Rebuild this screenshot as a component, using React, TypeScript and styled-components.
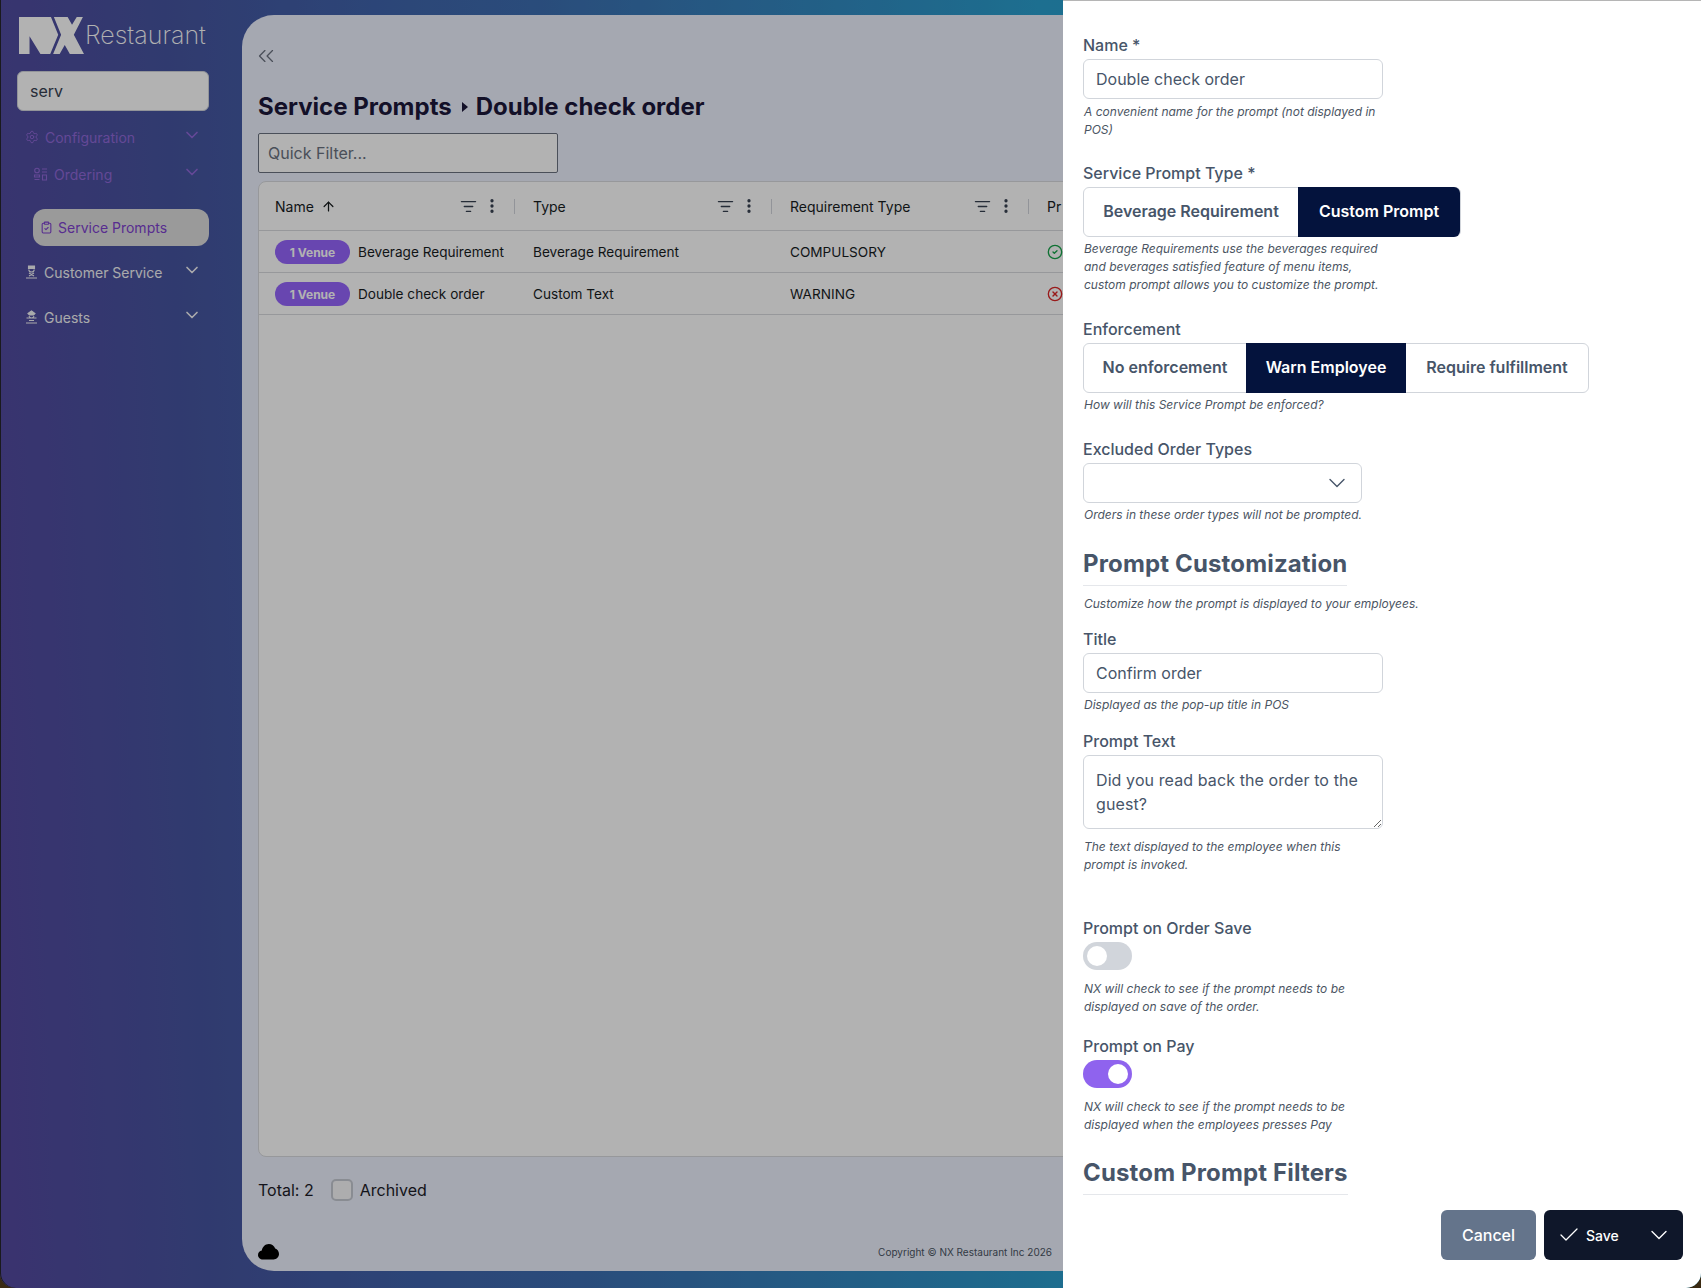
import React from 'react'
import styled, { createGlobalStyle } from 'styled-components'
import {
  ArrowUp,
  Check,
  ChevronDown,
  ChevronsLeft,
  CircleCheck,
  CircleX,
  ClipboardCheck,
  EllipsisVertical,
  ListFilter,
  Settings,
} from 'lucide-react'

const GlobalStyle = createGlobalStyle`
  html, body {
    margin: 0;
    padding: 0;
    background: #3a2a12;
  }
  * {
    box-sizing: border-box;
  }
  body {
    font-family: Inter, "Liberation Sans", sans-serif;
  }
`

const Screen = styled.div`
  position: relative;
  display: flex;
  width: 1701px;
  height: 1288px;
  overflow: hidden;
  border-radius: 0 0 15px 15px;
  box-shadow: inset 1px 0 0 #26262c;
  background: linear-gradient(88deg, #54499f 0%, #46549f 12%, #4064ac 24%, #3d6db0 33%, #2a9fce 62%, #20a5cf 100%);
`

const Sidebar = styled.aside`
  flex: 0 0 242px;
  width: 242px;
  min-width: 0;
  padding: 17px 33px 0 17px;
  display: flex;
  flex-direction: column;
`

const Brand = styled.div`
  display: flex;
  align-items: center;
  height: 37px;
  padding-left: 2px;
  gap: 1px;
  white-space: nowrap;
`

const BrandText = styled.span`
  color: #fff;
  font-size: 25px;
  font-weight: 200;
  line-height: 30px;
  margin-top: -2px;
`

const SearchBox = styled.input`
  margin-top: 17px;
  height: 40px;
  width: 100%;
  border: 1px solid #d1d5db;
  border-radius: 6px;
  background: #fff;
  padding: 0 12px;
  font: 400 16px Inter, sans-serif;
  color: #374151;
`

const NavRow = styled.div<{ $top: number; $indent?: number; $muted?: boolean }>`
  display: flex;
  align-items: center;
  height: 36px;
  margin-top: ${(p) => p.$top}px;
  padding-left: ${(p) => 8 + (p.$indent || 0)}px;
  gap: 6px;
  font-size: 14px;
  font-weight: 400;
  color: ${(p) => (p.$muted ? '#9068d8' : '#f3f4f6')};
`

const NavLabel = styled.span`
  flex: 1;
  white-space: nowrap;
`

const NavChevron = styled(ChevronDown)`
  width: 20px;
  height: 20px;
  margin: -5px 7px 0 0;
  flex: none;
`

const NavPill = styled.div`
  display: flex;
  align-items: center;
  gap: 5px;
  height: 37px;
  margin: 17px 0 0 16px;
  padding-left: 7px;
  border-radius: 12px;
  background: #dddddd;
  color: #7e41ce;
  font-size: 14px;
  font-weight: 400;
`

const Card = styled.main`
  flex: 1;
  margin: 15px 0 17px;
  padding: 0 16px 7px;
  border-radius: 32px 0 0 32px;
  background: #edf1fe;
  display: flex;
  flex-direction: column;
  min-width: 0;
`

const CollapseRow = styled.div`
  height: 20px;
  margin: 31px 0 0 -5px;
  color: #6b7280;
  display: flex;
  align-items: center;
`

const PageTitle = styled.h1`
  margin: 25px 0 0;
  font-size: 24px;
  line-height: 32px;
  font-weight: 700;
  color: #1c173a;
  display: flex;
  align-items: center;
  gap: 8px;
`

const Crumb = styled.span`
  width: 0;
  height: 0;
  margin-left: 2px;
  border-left: 6px solid #1c173a;
  border-top: 5px solid transparent;
  border-bottom: 5px solid transparent;
`

const QuickFilter = styled.input`
  margin-top: 10px;
  width: 300px;
  height: 40px;
  flex: none;
  padding: 0 9px;
  border: 1px solid #6b7280;
  border-radius: 2px;
  background: #fff;
  font: 400 16px Inter, sans-serif;
  &::placeholder {
    color: #6b7280;
    opacity: 1;
  }
`

const Grid = styled.section`
  margin-top: 8px;
  flex: 1;
  border: 1px solid #d8dade;
  border-radius: 8px;
  background: #fff;
  overflow: hidden;
`

const GridRow = styled.div<{ $height: number }>`
  display: grid;
  grid-template-columns: 258px 257px 257px 400px;
  height: ${(p) => p.$height}px;
  border-bottom: 1px solid #d8dade;
  font-size: 13.6px;
  color: #181d1f;
`

const HeadCell = styled.div`
  display: flex;
  align-items: center;
  padding-left: 16px;
  font-size: 14px;
  font-weight: 400;
  white-space: nowrap;
`

const SortArrow = styled(ArrowUp)`
  width: 15px;
  height: 15px;
  margin-left: 7px;
`

const HeadTools = styled.div`
  margin: 0 2px 0 auto;
  display: flex;
  align-items: center;
  gap: 6px;
  color: #374151;
`

const HeadDivider = styled.span`
  width: 1px;
  height: 15px;
  margin-left: 7px;
  background: #d1d5db;
`

const BodyCell = styled.div`
  display: flex;
  align-items: center;
  padding-left: 16px;
  gap: 8px;
  white-space: nowrap;
`

const VenueBadge = styled.span`
  width: 75px;
  height: 24px;
  margin-top: 1px;
  border-radius: 12px;
  background: #9565fd;
  color: #fff;
  font-size: 12px;
  font-weight: 700;
  display: flex;
  align-items: center;
  justify-content: center;
`

const TotalRow = styled.div`
  margin-top: 21px;
  height: 24px;
  display: flex;
  align-items: center;
  font-size: 16px;
  color: #1c1c28;
`

const FakeCheckbox = styled.span`
  width: 22px;
  height: 22px;
  margin: 0 7px 0 17px;
  border: 2px solid #c5c9d2;
  border-radius: 5px;
  background: #f8f8fa;
`

const CardFooter = styled.div`
  margin-top: 38px;
  width: 794px;
  height: 24px;
  display: flex;
  align-items: center;
  justify-content: space-between;
`

const Copyright = styled.span`
  font-size: 10px;
  color: #4b5563;
`

const Dimmer = styled.div`
  position: absolute;
  inset: 0;
  background: rgba(0, 0, 0, 0.3);
`

const Drawer = styled.aside`
  position: absolute;
  top: 0;
  right: 0;
  bottom: 0;
  width: 638px;
  background: #fff;
  border-top: 1px solid #b5b5b5;
  display: flex;
  flex-direction: column;
`

const FormScroll = styled.div`
  flex: 1;
  min-height: 0;
  overflow: hidden;
  padding: 32px 20px 0;
`

const Field = styled.div<{ $top?: number }>`
  margin-top: ${(p) => p.$top ?? 0}px;
`

const Label = styled.label`
  display: block;
  font-size: 16px;
  font-weight: 500;
  line-height: 24px;
  margin-bottom: 2px;
  color: #475569;
`

const TextInput = styled.input`
  display: block;
  width: 300px;
  height: 40px;
  padding: 0 12px;
  border: 1px solid #d1d5db;
  border-radius: 6px;
  background: #fff;
  font: 400 16px Inter, sans-serif;
  color: #475569;
  outline: none;
`

const TextArea = styled.textarea`
  display: block;
  width: 300px;
  height: 74px;
  padding: 12px;
  border: 1px solid #d1d5db;
  border-radius: 6px;
  font: 400 16px/24px Inter, sans-serif;
  letter-spacing: 0.1px;
  color: #475569;
  outline: none;
`

const Help = styled.p<{ $top?: number; $width?: number }>`
  margin: ${(p) => p.$top ?? 3}px 0 0 1px;
  width: ${(p) => p.$width ?? 300}px;
  font-size: 12px;
  line-height: 18px;
  font-style: italic;
  color: #4b5563;
`

const ButtonGroup = styled.div`
  display: inline-flex;
  vertical-align: top;
  height: 50px;
  border: 1px solid #d1d5db;
  border-radius: 6px;
`

const GroupButton = styled.button<{ $active?: boolean; $width: number; $end?: boolean }>`
  width: ${(p) => p.$width}px;
  margin: -1px 0;
  border: 0;
  border-radius: ${(p) => (p.$end ? '0 6px 6px 0' : '0')};
  background: ${(p) => (p.$active ? '#04133d' : 'transparent')};
  color: ${(p) => (p.$active ? '#fff' : '#475569')};
  font: 600 16px Inter, sans-serif;
  padding: 0 0 2px;
`

const GroupRow = styled.div`
  height: 50px;
`

const SelectBox = styled.div`
  width: 279px;
  height: 40px;
  border: 1px solid #d1d5db;
  border-radius: 6px;
  display: flex;
  align-items: center;
  justify-content: flex-end;
  padding-right: 10px;
  color: #475569;
`

const SectionTitle = styled.h2<{ $top: number }>`
  margin: ${(p) => p.$top}px 0 0;
  width: fit-content;
  padding: 1px 0 5px;
  border-bottom: 1px solid #e5e7eb;
  font-size: 24px;
  line-height: 32px;
  font-weight: 700;
  letter-spacing: 0.15px;
  color: #475569;
`

const Toggle = styled.span<{ $on?: boolean }>`
  display: flex;
  justify-content: ${(p) => (p.$on ? 'flex-end' : 'flex-start')};
  width: 49px;
  height: 28px;
  padding: 4px;
  border-radius: 14px;
  background: ${(p) => (p.$on ? '#8f63ee' : '#d1d5db')};
  &::after {
    content: '';
    width: 20px;
    height: 20px;
    border-radius: 50%;
    background: #fff;
  }
`

const DrawerFooter = styled.footer`
  flex: none;
  height: 88px;
  padding: 10px 18px 0 0;
  display: flex;
  justify-content: flex-end;
  gap: 8px;
`

const CancelButton = styled.button`
  width: 95px;
  height: 50px;
  border: 0;
  border-radius: 6px;
  background: #64748b;
  color: #fff;
  font: 500 16px Inter, sans-serif;
`

const SaveButton = styled.button`
  width: 139px;
  height: 50px;
  border: 0;
  border-radius: 6px;
  background: #0f172a;
  color: #fff;
  font: 500 14px Inter, sans-serif;
  display: flex;
  align-items: center;
  padding: 0 10px 0 13px;
  gap: 5px;
`

const SaveLabel = styled.span`
  flex: 1;
  text-align: left;
`

const LogoMark = () => (
  <svg width="65" height="37" viewBox="16 15 179 110" preserveAspectRatio="none" fill="#fff">
    <polygon points="16,15 104,15 124,68 102,125 75,125 45,72 45,125 16,125" />
    <polygon points="112,15 150,15 162,38 175,15 192,15 167,68 195,125 156,125 142,98 128,125 110,125 132,68" />
  </svg>
)

const OrderingIcon = () => (
  <svg width="15" height="14" viewBox="0 0 15 14" fill="none" stroke="currentColor" strokeWidth="1.1">
    <circle cx="4" cy="3.5" r="2.3" />
    <path d="M9 2h5M9 5h5M1.500 8h5v2h-5zM1.500 12.500h5M9.500 8h4v5h-4z" />
  </svg>
)

const ServerIcon = () => (
  <svg width="13" height="14" viewBox="0 0 13 14" fill="none" stroke="currentColor" strokeWidth="1.1">
    <path d="M3.500 1h6v2.500h-6z" fill="currentColor" />
    <path d="M3.800 4.500c0 3.400 5.400 3.400 5.400 0M4 8l5 3M9 8l-5 3M1 13h11" />
  </svg>
)

const GuestIcon = () => (
  <svg width="13" height="14" viewBox="0 0 13 14" fill="none" stroke="currentColor" strokeWidth="1.1">
    <path d="M3 3.500 6.500 1 10 3.500 8.500 5h-4z" fill="currentColor" />
    <path d="M4 6c.4 2.600 4.600 2.600 5 0M1.500 8h10M4 10.500h5M1 13h11" />
  </svg>
)

const CloudIcon = () => (
  <svg width="21" height="16" viewBox="0 0 21 16" fill="#000">
    <path d="M5 15.500C2.200 15.500 0 13.500 0 11c0-2.200 1.600-4 3.800-4.400C4.300 2.900 7.200 0 10.800 0c3 0 5.500 1.900 6.400 4.600 2.200.8 3.800 3 3.800 5.500 0 3-2.400 5.400-5.400 5.400z" />
  </svg>
)

const ColumnTools = () => (
  <HeadTools>
    <ListFilter size={17} strokeWidth={1.8} />
    <EllipsisVertical size={18} strokeWidth={2.4} />
    <HeadDivider />
  </HeadTools>
)

const rows = [
  { name: 'Beverage Requirement', type: 'Beverage Requirement', requirement: 'COMPULSORY', ok: true },
  { name: 'Double check order', type: 'Custom Text', requirement: 'WARNING', ok: false },
]

const App = () => {
  return (
    <>
      <GlobalStyle />
      <Screen>
        <Sidebar>
          <Brand>
            <LogoMark />
            <BrandText>Restaurant</BrandText>
          </Brand>
          <SearchBox readOnly value="serv" />
          <NavRow $top={8} $muted>
            <Settings size={14} strokeWidth={1.6} />
            <NavLabel>Configuration</NavLabel>
            <NavChevron />
          </NavRow>
          <NavRow $top={1} $indent={8} $muted>
            <OrderingIcon />
            <NavLabel>Ordering</NavLabel>
            <NavChevron />
          </NavRow>
          <NavPill>
            <ClipboardCheck size={13} />
            Service Prompts
          </NavPill>
          <NavRow $top={8}>
            <ServerIcon />
            <NavLabel>Customer Service</NavLabel>
            <NavChevron />
          </NavRow>
          <NavRow $top={9}>
            <GuestIcon />
            <NavLabel>Guests</NavLabel>
            <NavChevron />
          </NavRow>
        </Sidebar>

        <Card>
          <CollapseRow>
            <ChevronsLeft size={26} strokeWidth={1.2} />
          </CollapseRow>
          <PageTitle>
            Service Prompts <Crumb /> Double check order
          </PageTitle>
          <QuickFilter placeholder="Quick Filter..." />
          <Grid>
            <GridRow $height={49}>
              <HeadCell>
                Name
                <SortArrow />
                <ColumnTools />
              </HeadCell>
              <HeadCell>
                Type
                <ColumnTools />
              </HeadCell>
              <HeadCell>
                Requirement Type
                <ColumnTools />
              </HeadCell>
              <HeadCell>Pr</HeadCell>
            </GridRow>
            {rows.map((row) => (
              <GridRow $height={42} key={row.name}>
                <BodyCell>
                  <VenueBadge>1 Venue</VenueBadge>
                  {row.name}
                </BodyCell>
                <BodyCell>{row.type}</BodyCell>
                <BodyCell>{row.requirement}</BodyCell>
                <BodyCell>
                  {row.ok ? <CircleCheck size={16} color="#16a34a" /> : <CircleX size={16} color="#dc2626" />}
                </BodyCell>
              </GridRow>
            ))}
          </Grid>
          <TotalRow>
            Total: 2
            <FakeCheckbox />
            Archived
          </TotalRow>
          <CardFooter>
            <CloudIcon />
            <Copyright>Copyright © NX Restaurant Inc 2026</Copyright>
          </CardFooter>
        </Card>

        <Dimmer />

        <Drawer>
          <FormScroll>
            <Field>
              <Label>Name *</Label>
              <TextInput readOnly value="Double check order" />
              <Help $top={4}>A convenient name for the prompt (not displayed in POS)</Help>
            </Field>
            <Field $top={22}>
              <Label>Service Prompt Type *</Label>
              <GroupRow>
                <ButtonGroup>
                  <GroupButton $width={214}>Beverage Requirement</GroupButton>
                  <GroupButton $width={162} $active $end>
                    Custom Prompt
                  </GroupButton>
                </ButtonGroup>
              </GroupRow>
              <Help>
                Beverage Requirements use the beverages required and beverages satisfied feature of menu items, custom
                prompt allows you to customize the prompt.
              </Help>
            </Field>
            <Field $top={23}>
              <Label>Enforcement</Label>
              <GroupRow>
                <ButtonGroup>
                  <GroupButton $width={162}>No enforcement</GroupButton>
                  <GroupButton $width={160} $active>
                    Warn Employee
                  </GroupButton>
                  <GroupButton $width={182} $end>
                    Require fulfillment
                  </GroupButton>
                </ButtonGroup>
              </GroupRow>
              <Help>How will this Service Prompt be enforced?</Help>
            </Field>
            <Field $top={23}>
              <Label>Excluded Order Types</Label>
              <SelectBox>
                <ChevronDown size={28} strokeWidth={1.2} />
              </SelectBox>
              <Help>Orders in these order types will not be prompted.</Help>
            </Field>
            <SectionTitle $top={23}>Prompt Customization</SectionTitle>
            <Help $top={9} $width={400}>
              Customize how the prompt is displayed to your employees.
            </Help>
            <Field $top={14}>
              <Label>Title</Label>
              <TextInput readOnly value="Confirm order" />
              <Help>Displayed as the pop-up title in POS</Help>
            </Field>
            <Field $top={15}>
              <Label>Prompt Text</Label>
              <TextArea readOnly value="Did you read back the order to the guest?" />
              <Help $top={9}>The text displayed to the employee when this prompt is invoked.</Help>
            </Field>
            <Field $top={42}>
              <Label>Prompt on Order Save</Label>
              <Toggle />
              <Help $top={10}>NX will check to see if the prompt needs to be displayed on save of the order.</Help>
            </Field>
            <Field $top={18}>
              <Label>Prompt on Pay</Label>
              <Toggle $on />
              <Help $top={10}>NX will check to see if the prompt needs to be displayed when the employees presses Pay</Help>
            </Field>
            <SectionTitle $top={22}>Custom Prompt Filters</SectionTitle>
          </FormScroll>
          <DrawerFooter>
            <CancelButton>Cancel</CancelButton>
            <SaveButton>
              <Check size={24} strokeWidth={1.3} />
              <SaveLabel>Save</SaveLabel>
              <ChevronDown size={28} strokeWidth={1.2} />
            </SaveButton>
          </DrawerFooter>
        </Drawer>
      </Screen>
    </>
  )
}

export default App
